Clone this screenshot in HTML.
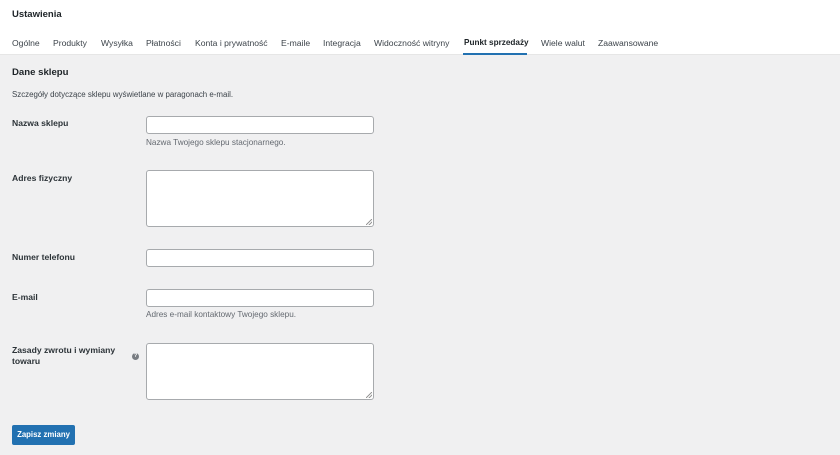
<!DOCTYPE html>
<html><head><meta charset="utf-8"><style>
*{margin:0;padding:0;box-sizing:border-box}
body{width:840px;height:455px;background:#f0f0f1;font-family:"Liberation Sans",sans-serif;color:#1d2327;position:relative;overflow:hidden}
.hdr{position:absolute;left:0;top:0;width:840px;height:55px;background:#fff;border-bottom:1px solid #e6e6e6}
.a{position:absolute;white-space:nowrap}
.t{top:38px;font-size:8.6px;color:#3c434a}
.lbl{font-size:8.6px;font-weight:bold;left:12px;line-height:11px;color:#2c3338}
.inp{position:absolute;left:146px;width:228px;height:18px;background:#fff;border:1px solid #a7aaad;border-radius:3px}
.ta{height:57px}
.ta:after{content:"";position:absolute;right:1px;bottom:1px;width:6px;height:6px;background:linear-gradient(135deg,transparent 45%,#999 45%,#999 55%,transparent 55%,transparent 70%,#999 70%,#999 80%,transparent 80%)}
.desc{font-size:8.2px;color:#646970;left:146px}
</style></head><body>
<div class="hdr"></div>
<div class="a" style="left:12px;top:9px;font-size:9.5px;font-weight:bold">Ustawienia</div>
<div class="a t" style="left:12px">Ogólne</div>
<div class="a t" style="left:53px">Produkty</div>
<div class="a t" style="left:101px">Wysyłka</div>
<div class="a t" style="left:146px">Płatności</div>
<div class="a t" style="left:195px">Konta i prywatność</div>
<div class="a t" style="left:281px">E-maile</div>
<div class="a t" style="left:323px">Integracja</div>
<div class="a t" style="left:374px">Widoczność witryny</div>
<div class="a t" style="left:464px;font-weight:bold;color:#1d2327;font-size:8.2px">Punkt sprzedaży</div>
<div class="a" style="left:463px;top:53px;width:64px;height:2px;background:#2271b1"></div>
<div class="a t" style="left:541px">Wiele walut</div>
<div class="a t" style="left:598px">Zaawansowane</div>

<div class="a" style="left:12px;top:67px;font-size:9.6px;font-weight:bold">Dane sklepu</div>
<div class="a" style="left:12px;top:90px;font-size:7.9px;color:#3c434a">Szczegóły dotyczące sklepu wyświetlane w paragonach e-mail.</div>

<div class="a lbl" style="top:118px">Nazwa sklepu</div>
<div class="inp" style="top:116px"></div>
<div class="a desc" style="top:138px">Nazwa Twojego sklepu stacjonarnego.</div>

<div class="a lbl" style="top:173px">Adres fizyczny</div>
<div class="inp ta" style="top:170px"></div>

<div class="a lbl" style="top:252px">Numer telefonu</div>
<div class="inp" style="top:249px"></div>

<div class="a lbl" style="top:292px">E-mail</div>
<div class="inp" style="top:289px"></div>
<div class="a desc" style="top:310px">Adres e-mail kontaktowy Twojego sklepu.</div>

<div class="a lbl" style="top:345px">Zasady zwrotu i wymiany<br>towaru</div>
<div class="a" style="left:132px;top:353px;width:7px;height:7px;border-radius:50%;background:#787c82;color:#fff;font-size:5.5px;font-weight:bold;text-align:center;line-height:7px">?</div>
<div class="inp ta" style="top:343px"></div>

<div class="a" style="left:12px;top:425px;width:63px;height:20px;background:#2271b1;border-radius:2px;color:#fff;font-size:7.8px;font-weight:bold;text-align:center;line-height:20px">Zapisz zmiany</div>
</body></html>
